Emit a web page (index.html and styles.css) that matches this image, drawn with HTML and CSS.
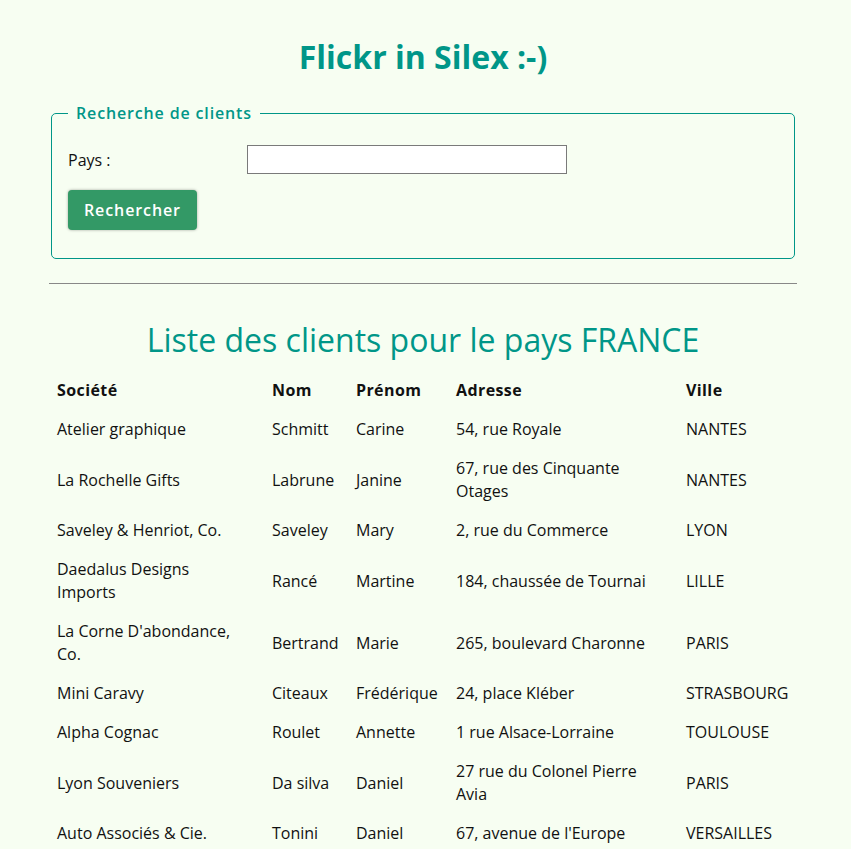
FILE: index.html
```html
<!DOCTYPE html>
<html lang="fr">
<head>
<meta charset="utf-8">
<title>Flickr in Silex</title>
<link rel="stylesheet" href="styles.css">
</head>
<body>
<div class="page">
  <h1 class="title">Flickr in Silex :-)</h1>
  <form class="search">
    <fieldset class="box">
      <legend class="box-legend">Recherche de clients</legend>
      <div class="field">
        <label class="field-label" for="pays">Pays :</label>
        <input class="field-input" id="pays" type="text">
      </div>
      <button class="btn" type="button">Rechercher</button>
    </fieldset>
  </form>
  <hr class="sep">
  <h2 class="subtitle">Liste des clients pour le pays FRANCE</h2>
  <table class="clients">
    <colgroup>
      <col class="c-soc"><col class="c-nom"><col class="c-pre"><col class="c-adr"><col class="c-vil">
    </colgroup>
    <thead>
      <tr><th>Société</th><th>Nom</th><th>Prénom</th><th>Adresse</th><th>Ville</th></tr>
    </thead>
    <tbody>
      <tr><td>Atelier graphique</td><td>Schmitt</td><td>Carine</td><td>54, rue Royale</td><td>NANTES</td></tr>
      <tr><td>La Rochelle Gifts</td><td>Labrune</td><td>Janine</td><td>67, rue des Cinquante Otages</td><td>NANTES</td></tr>
      <tr><td>Saveley &amp; Henriot, Co.</td><td>Saveley</td><td>Mary</td><td>2, rue du Commerce</td><td>LYON</td></tr>
      <tr><td>Daedalus Designs Imports</td><td>Rancé</td><td>Martine</td><td>184, chaussée de Tournai</td><td>LILLE</td></tr>
      <tr><td>La Corne D'abondance, Co.</td><td>Bertrand</td><td>Marie</td><td>265, boulevard Charonne</td><td>PARIS</td></tr>
      <tr><td>Mini Caravy</td><td>Citeaux</td><td>Frédérique</td><td>24, place Kléber</td><td>STRASBOURG</td></tr>
      <tr><td>Alpha Cognac</td><td>Roulet</td><td>Annette</td><td>1 rue Alsace-Lorraine</td><td>TOULOUSE</td></tr>
      <tr><td>Lyon Souveniers</td><td>Da silva</td><td>Daniel</td><td>27 rue du Colonel Pierre Avia</td><td>PARIS</td></tr>
      <tr><td>Auto Associés &amp; Cie.</td><td>Tonini</td><td>Daniel</td><td>67, avenue de l'Europe</td><td>VERSAILLES</td></tr>
    </tbody>
  </table>
</div>
</body>
</html>
```

FILE: styles.css
```css
html, body {
  margin: 0;
  padding: 0;
}
body {
  background: #f7fef2;
  color: #111;
  font-family: "Open Sans", "Noto Sans", sans-serif;
  font-size: 16px;
  line-height: 23px;
}
.page {
  margin: 0 54px 0 49px;
  padding-top: 38px;
}
.title {
  margin: 0;
  text-align: center;
  color: #009688;
  font-size: 32px;
  font-weight: 700;
  line-height: 38px;
}
.search {
  margin: 26px 0 0;
}
.box {
  margin: 0 2px;
  border: 1px solid #009688;
  border-radius: 5px;
  padding: 0 16px 28px;
}
.box-legend {
  margin-left: 0;
  padding: 0 8px;
  color: #009688;
  font-weight: 600;
  letter-spacing: 0.85px;
  line-height: 22px;
}
.field {
  display: flex;
  align-items: center;
  margin-top: 21px;
}
.field-label {
  width: 179px;
  padding-top: 2px;
}
.field-input {
  box-sizing: border-box;
  width: 320px;
  height: 29px;
  margin: 0;
  border: 1px solid #7a7a7a;
  background: #fff;
  font: inherit;
  padding: 2px 6px;
}
.btn {
  display: block;
  margin-top: 16px;
  height: 40px;
  padding: 0 16px;
  border: none;
  border-radius: 4px;
  background: #339966;
  color: #fff;
  font-family: inherit;
  font-size: 16px;
  font-weight: 600;
  letter-spacing: 0.9px;
  box-shadow: 0 0 3px rgba(0, 0, 0, 0.35);
}
.sep {
  margin: 24px 0 0;
  border: none;
  border-top: 1px solid #888;
  height: 0;
}
.subtitle {
  margin: 37px 0 0;
  text-align: center;
  color: #009688;
  font-size: 32px;
  font-weight: 400;
  line-height: 38px;
}
.clients {
  margin-top: 12px;
  width: 100%;
  border-collapse: collapse;
  table-layout: fixed;
}
.c-soc { width: 215px; }
.c-nom { width: 84px; }
.c-pre { width: 100px; }
.c-adr { width: 230px; }
.clients th,
.clients td {
  padding: 8px;
  text-align: left;
  vertical-align: middle;
}
.clients th {
  font-weight: 700;
  letter-spacing: 0.4px;
}
.clients td:first-child {
  padding-right: 24px;
}
```
